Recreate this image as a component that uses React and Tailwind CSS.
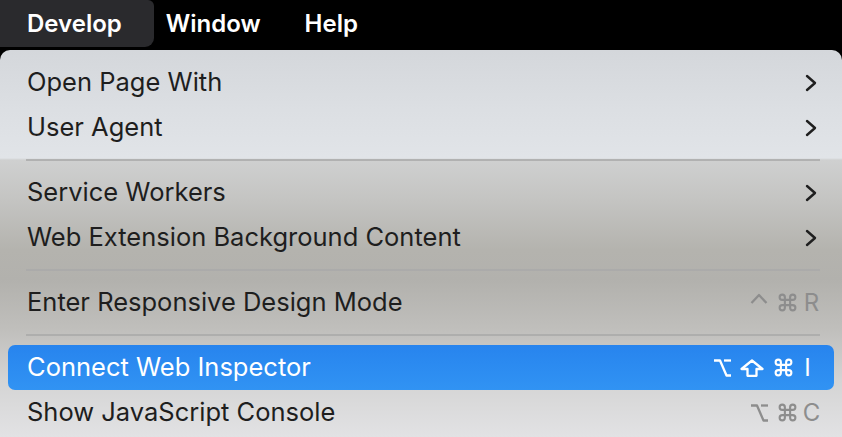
import React from "react";

const font = { fontFamily: "Inter, 'Noto Sans', sans-serif" };

function Chevron() {
  return (
    <svg viewBox="0 0 12 18" className="h-[18px] w-[12px]" aria-hidden="true">
      <polyline points="2,2 10,9 2,16" fill="none" stroke="#1f1f1f" strokeWidth="2.4" strokeLinecap="round" strokeLinejoin="round" />
    </svg>
  );
}

// modifier key glyphs, drawn to match the macOS menu font
function KeyIcon({ name }) {
  const common = { fill: "none", stroke: "currentColor", strokeWidth: 2.3, strokeLinejoin: "round", strokeLinecap: "butt" };
  if (name === "ctrl") {
    return (
      <svg viewBox="0 0 18 11" className="mt-[-8px] h-[11px] w-[18px]" aria-hidden="true">
        <polyline points="1.5,10 9,2 16.5,10" {...common} />
      </svg>
    );
  }
  if (name === "opt") {
    return (
      <svg viewBox="0 0 17 18" className="h-[18px] w-[17px]" aria-hidden="true">
        <polyline points="0,1.5 6,1.5 12.5,16.5 17,16.5" {...common} />
        <line x1="10" y1="1.5" x2="17" y2="1.5" {...common} />
      </svg>
    );
  }
  if (name === "shift") {
    return (
      <svg viewBox="0 0 24 18" className="h-[18px] w-[24px]" aria-hidden="true">
        <polygon points="12,1.5 22.5,10 16.5,10 16.5,16.8 7.5,16.8 7.5,10 1.5,10" {...common} />
      </svg>
    );
  }
  // command
  return (
    <svg viewBox="0 0 24 24" className="h-[21px] w-[21px]" aria-hidden="true">
      <path d="M15 6v12a3 3 0 1 0 3-3H6a3 3 0 1 0 3 3V6a3 3 0 1 0-3 3h12a3 3 0 1 0-3-3" {...common} strokeWidth={2.4} />
    </svg>
  );
}

function Keys({ mods, letter, active }) {
  return (
    <div className={`flex items-center ${active ? "text-white" : "text-[#8d8d8d]"}`}>
      <div className="flex items-center gap-[9px]">
        {mods.map((m) => (
          <KeyIcon key={m} name={m} />
        ))}
      </div>
      <span className="w-[27px] text-center text-[24px] leading-none">{letter}</span>
    </div>
  );
}

function Row({ label, submenu, mods, letter, active }) {
  if (active) {
    return (
      <div className="mx-[8px] flex h-[45px] items-center justify-between rounded-[7px] bg-[linear-gradient(180deg,#2784ee,#3193f3)] pl-[19px] pr-[13px]">
        <span className="text-[25.5px] text-white">{label}</span>
        <Keys mods={mods} letter={letter} active />
      </div>
    );
  }
  return (
    <div className={`flex h-[45px] items-center justify-between pl-[27px] ${submenu ? "pr-[25px]" : "pr-[17px]"}`}>
      <span className="text-[25.5px] text-[#1e1e1e]">{label}</span>
      {submenu ? <Chevron /> : null}
      {mods ? <Keys mods={mods} letter={letter} /> : null}
    </div>
  );
}

function Separator() {
  return (
    <div className="flex h-[20px] items-center pl-[26px] pr-[22px]">
      <div className="h-[2px] w-full bg-[#a9a9a9]/80" />
    </div>
  );
}

export default function App() {
  return (
    <div className="flex h-[437px] w-[842px] flex-col overflow-hidden bg-black" style={font}>
      <div className="flex h-[48px] items-center text-[24px] font-semibold text-white">
        <div className="flex h-[47px] items-center self-start rounded-br-[9px] rounded-tr-[6px] bg-[#2a2a2d] pl-[27px] pr-[32px]">Develop</div>
        <div className="pl-[12px]">Window</div>
        <div className="pl-[44px]">Help</div>
      </div>
      <div className="mt-[2px] flex-1 rounded-t-[10px] bg-[linear-gradient(180deg,#d4d7db_0px,#dcdfe3_60px,#e1e4e8_108px,#cfd0d0_110px,#c4c4c2_150px,#b4b3ae_200px,#b2b1ad_230px,#c0bfbc_280px,#d4d4d4_330px,#e2e2e4_387px)] pt-[10px]">
        <Row label="Open Page With" submenu />
        <Row label="User Agent" submenu />
        <Separator />
        <Row label="Service Workers" submenu />
        <Row label="Web Extension Background Content" submenu />
        <Separator />
        <Row label="Enter Responsive Design Mode" mods={["ctrl", "cmd"]} letter="R" />
        <Separator />
        <Row label="Connect Web Inspector" mods={["opt", "shift", "cmd"]} letter="I" active />
        <Row label="Show JavaScript Console" mods={["opt", "cmd"]} letter="C" />
      </div>
    </div>
  );
}
